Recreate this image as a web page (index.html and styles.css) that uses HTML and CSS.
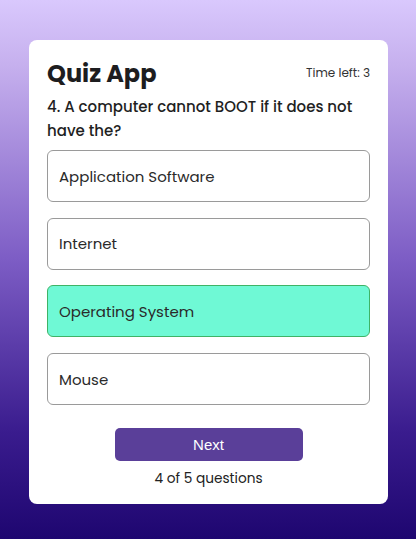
FILE: index.html
```html
<!DOCTYPE html>
<html lang="en">
<head>
<meta charset="utf-8">
<title>Quiz App</title>
<link rel="stylesheet" href="styles.css">
</head>
<body>
<main class="quiz">
  <header class="quiz-head">
    <h1 class="quiz-title">Quiz App</h1>
    <span class="timer">Time left: 3</span>
  </header>
  <p class="question">4. A computer cannot BOOT if it does not have the?</p>
  <ul class="options">
    <li class="option">Application Software</li>
    <li class="option">Internet</li>
    <li class="option option-correct">Operating System</li>
    <li class="option">Mouse</li>
  </ul>
  <footer class="quiz-foot">
    <button class="next-btn">Next</button>
    <p class="progress">4 of 5 questions</p>
  </footer>
</main>
</body>
</html>
```
FILE: styles.css
```css
* { box-sizing: border-box; }
html, body { height: 100%; }
body {
  margin: 0;
  font-family: "Poppins", "Open Sans", sans-serif;
  color: #222;
  background: linear-gradient(180deg, #d9c8fd 0%, #c6b0ee 12%, #7d5dc5 48%, #3a1c8e 80%, #1e0670 100%);
  padding: 40px 28px 36px 29px;
}
.quiz {
  background: #fff;
  border-radius: 8px;
  width: 359px;
  padding: 18px 18px 15px 18px;
}
.quiz-head {
  display: flex;
  justify-content: space-between;
  align-items: center;
  height: 30px;
}
.quiz-title {
  margin: 0;
  font-size: 24px;
  font-weight: 700;
  color: #1d1d1f;
}
.timer {
  font-size: 12px;
  color: #333;
}
.question {
  margin: 7px 0 7px;
  font-size: 15px;
  line-height: 24px;
  font-weight: 500;
  color: #1f1f1f;
}
.options {
  list-style: none;
  margin: 0;
  padding: 0;
  display: flex;
  flex-direction: column;
  gap: 15.7px;
}
.option {
  height: 52px;
  border: 1px solid #9a9a9a;
  border-radius: 6px;
  padding: 0 11px;
  display: flex;
  align-items: center;
  font-size: 15px;
  color: #2a2a2a;
}
.option-correct {
  background: #6ff9d5;
  border-color: #3fb366;
}
.quiz-foot {
  display: flex;
  flex-direction: column;
  align-items: center;
  margin-top: 23px;
}
.next-btn {
  width: 188px;
  height: 33px;
  border: none;
  border-radius: 5px;
  background: #5a3f99;
  color: #fff;
  font-family: "Liberation Sans", Arial, sans-serif;
  font-size: 15px;
}
.progress {
  margin: 8px 0 0;
  font-size: 13.7px;
  color: #222;
}
```
